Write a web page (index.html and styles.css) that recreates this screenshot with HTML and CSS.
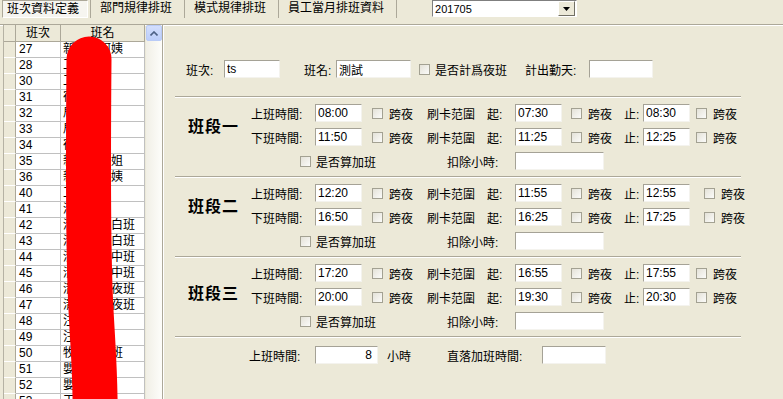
FILE: index.html
```html
<!DOCTYPE html>
<html lang="zh-Hant">

<head>
    <meta charset="UTF-8">
    <title>班次資料定義</title>
    <link rel="stylesheet" href="styles.css">
</head>

<body>
    <div class="topbar">
        <div class="tabs">
            <span class="tab active">班次資料定義</span>
            <span class="tab">部門規律排班</span>
            <span class="tab">模式規律排班</span>
            <span class="tab last">員工當月排班資料</span>
        </div>
        <div class="combo">
            <span class="combo-text">201705</span>
            <span class="combo-btn">
                <svg width="7" height="4" viewBox="0 0 7 4"><path d="M0 0h7L3.5 4z" fill="#000"/></svg>
            </span>
        </div>
    </div>

    <div class="main">
        <div class="grid-panel">
            <div class="grid">
                <div class="grid-cols">
                    <div class="g-head">
                        <div class="c-ind"></div>
                        <div class="c-no">班次</div>
                        <div class="c-name">班名</div>
                    </div>
                    <div class="g-row"><div class="c-ind"></div><div class="c-no">27</div><div class="c-name">新莊陳阿姨</div></div>
                    <div class="g-row"><div class="c-ind"></div><div class="c-no">28</div><div class="c-name">工讀生</div></div>
                    <div class="g-row"><div class="c-ind"></div><div class="c-no">30</div><div class="c-name">工讀晚班</div></div>
                    <div class="g-row"><div class="c-ind"></div><div class="c-no">31</div><div class="c-name">宿舍管理</div></div>
                    <div class="g-row"><div class="c-ind"></div><div class="c-no">32</div><div class="c-name">局部支援</div></div>
                    <div class="g-row"><div class="c-ind"></div><div class="c-no">33</div><div class="c-name">局部加班</div></div>
                    <div class="g-row"><div class="c-ind"></div><div class="c-no">34</div><div class="c-name">宿舍夜班</div></div>
                    <div class="g-row"><div class="c-ind"></div><div class="c-no">35</div><div class="c-name">新莊王小姐</div></div>
                    <div class="g-row"><div class="c-ind"></div><div class="c-no">36</div><div class="c-name">新莊林阿姨</div></div>
                    <div class="g-row"><div class="c-ind"></div><div class="c-no">40</div><div class="c-name">工讀生</div></div>
                    <div class="g-row"><div class="c-ind"></div><div class="c-no">41</div><div class="c-name">清潔人員</div></div>
                    <div class="g-row"><div class="c-ind"></div><div class="c-no">42</div><div class="c-name">清潔人員白班</div></div>
                    <div class="g-row"><div class="c-ind"></div><div class="c-no">43</div><div class="c-name">清潔助理白班</div></div>
                    <div class="g-row"><div class="c-ind"></div><div class="c-no">44</div><div class="c-name">清潔人員中班</div></div>
                    <div class="g-row"><div class="c-ind"></div><div class="c-no">45</div><div class="c-name">清潔助理中班</div></div>
                    <div class="g-row"><div class="c-ind"></div><div class="c-no">46</div><div class="c-name">清潔人員夜班</div></div>
                    <div class="g-row"><div class="c-ind"></div><div class="c-no">47</div><div class="c-name">清潔助理夜班</div></div>
                    <div class="g-row"><div class="c-ind"></div><div class="c-no">48</div><div class="c-name">注射室</div></div>
                    <div class="g-row"><div class="c-ind"></div><div class="c-no">49</div><div class="c-name">注射室二</div></div>
                    <div class="g-row"><div class="c-ind"></div><div class="c-no">50</div><div class="c-name">牧場人員班</div></div>
                    <div class="g-row"><div class="c-ind"></div><div class="c-no">51</div><div class="c-name">嬰兒室</div></div>
                    <div class="g-row"><div class="c-ind"></div><div class="c-no">52</div><div class="c-name">嬰兒室夜</div></div>
                    <div class="g-row"><div class="c-ind"></div><div class="c-no">53</div><div class="c-name">工讀生</div></div>
                </div>
                <div class="vscroll">
                    <div class="sb-up">
                        <svg width="8" height="5" viewBox="0 0 8 5"><path d="M0.5 4.5L4 1l3.5 3.5" fill="none" stroke="#4d6185" stroke-width="1.6"/></svg>
                    </div>
                </div>
            </div>
            <!-- red marker over the names -->
            <svg class="scribble" width="162" height="374" viewBox="0 0 162 374">
                <path d="M89 34C88 150 88 230 91 285S96 360 95 400" fill="none" stroke="#ff0000" stroke-width="45" stroke-linecap="round"/>
            </svg>
        </div>

        <div class="form">
            <div class="top-row">
                <span class="lbl w38">班次:</span>
                <input class="tb w56" type="text" value="ts">
                <span class="lbl w32 ml24">班名:</span>
                <input class="tb w75" type="text" value="測試">
                <label class="chk ml8"><input type="checkbox">是否計爲夜班</label>
                <span class="lbl w64 ml18">計出勤天:</span>
                <input class="tb w64" type="text">
            </div>

            <div class="sep"></div>

            <div class="sec">
                <div class="sec-title">班段一</div>
                <div class="rows">
                    <div class="row">
                        <span class="lbl w64">上班時間:</span>
                        <input class="tb w47" type="text" value="08:00">
                        <label class="chk cell-a"><input type="checkbox">跨夜</label>
                        <span class="lbl w60">刷卡范圍</span>
                        <span class="lbl w28">起:</span>
                        <input class="tb w47" type="text" value="07:30">
                        <label class="chk cell-b"><input type="checkbox">跨夜</label>
                        <span class="lbl w19">止:</span>
                        <input class="tb w47" type="text" value="08:30">
                        <label class="chk cell-c"><input type="checkbox">跨夜</label>
                    </div>
                    <div class="row">
                        <span class="lbl w64">下班時間:</span>
                        <input class="tb w47" type="text" value="11:50">
                        <label class="chk cell-a"><input type="checkbox">跨夜</label>
                        <span class="lbl w60">刷卡范圍</span>
                        <span class="lbl w28">起:</span>
                        <input class="tb w47" type="text" value="11:25">
                        <label class="chk cell-b"><input type="checkbox">跨夜</label>
                        <span class="lbl w19">止:</span>
                        <input class="tb w47" type="text" value="12:25">
                        <label class="chk cell-c"><input type="checkbox">跨夜</label>
                    </div>
                    <div class="row">
                        <label class="chk cell-ot"><input type="checkbox">是否算加班</label>
                        <span class="lbl w68">扣除小時:</span>
                        <input class="tb w89" type="text">
                    </div>
                </div>
            </div>

            <div class="sep"></div>

            <div class="sec">
                <div class="sec-title">班段二</div>
                <div class="rows">
                    <div class="row">
                        <span class="lbl w64">上班時間:</span>
                        <input class="tb w47" type="text" value="12:20">
                        <label class="chk cell-a"><input type="checkbox">跨夜</label>
                        <span class="lbl w60">刷卡范圍</span>
                        <span class="lbl w28">起:</span>
                        <input class="tb w47" type="text" value="11:55">
                        <label class="chk cell-b"><input type="checkbox">跨夜</label>
                        <span class="lbl w19">止:</span>
                        <input class="tb w47" type="text" value="12:55">
                        <label class="chk cell-c wide"><input type="checkbox">跨夜</label>
                    </div>
                    <div class="row">
                        <span class="lbl w64">下班時間:</span>
                        <input class="tb w47" type="text" value="16:50">
                        <label class="chk cell-a"><input type="checkbox">跨夜</label>
                        <span class="lbl w60">刷卡范圍</span>
                        <span class="lbl w28">起:</span>
                        <input class="tb w47" type="text" value="16:25">
                        <label class="chk cell-b"><input type="checkbox">跨夜</label>
                        <span class="lbl w19">止:</span>
                        <input class="tb w47" type="text" value="17:25">
                        <label class="chk cell-c wide"><input type="checkbox">跨夜</label>
                    </div>
                    <div class="row">
                        <label class="chk cell-ot"><input type="checkbox">是否算加班</label>
                        <span class="lbl w68">扣除小時:</span>
                        <input class="tb w89" type="text">
                    </div>
                </div>
            </div>

            <div class="sep"></div>

            <div class="sec">
                <div class="sec-title low">班段三</div>
                <div class="rows">
                    <div class="row">
                        <span class="lbl w64">上班時間:</span>
                        <input class="tb w47" type="text" value="17:20">
                        <label class="chk cell-a"><input type="checkbox">跨夜</label>
                        <span class="lbl w60">刷卡范圍</span>
                        <span class="lbl w28">起:</span>
                        <input class="tb w47" type="text" value="16:55">
                        <label class="chk cell-b"><input type="checkbox">跨夜</label>
                        <span class="lbl w19">止:</span>
                        <input class="tb w47" type="text" value="17:55">
                        <label class="chk cell-c"><input type="checkbox">跨夜</label>
                    </div>
                    <div class="row">
                        <span class="lbl w64">下班時間:</span>
                        <input class="tb w47" type="text" value="20:00">
                        <label class="chk cell-a"><input type="checkbox">跨夜</label>
                        <span class="lbl w60">刷卡范圍</span>
                        <span class="lbl w28">起:</span>
                        <input class="tb w47" type="text" value="19:30">
                        <label class="chk cell-b"><input type="checkbox">跨夜</label>
                        <span class="lbl w19">止:</span>
                        <input class="tb w47" type="text" value="20:30">
                        <label class="chk cell-c"><input type="checkbox">跨夜</label>
                    </div>
                    <div class="row">
                        <label class="chk cell-ot"><input type="checkbox">是否算加班</label>
                        <span class="lbl w68">扣除小時:</span>
                        <input class="tb w89" type="text">
                    </div>
                </div>
            </div>

            <div class="sep"></div>

            <div class="bottom-row">
                <span class="lbl w66">上班時間:</span>
                <input class="tb w63 num" type="text" value="8">
                <span class="lbl w60 ml9">小時</span>
                <span class="lbl w95">直落加班時間:</span>
                <input class="tb w64" type="text">
            </div>
        </div>
    </div>
</body>

</html>
```

FILE: styles.css
```css
* {
    box-sizing: border-box;
}

body {
    margin: 0;
    width: 783px;
    height: 399px;
    overflow: hidden;
    background: #ece9d8;
    color: #000;
    font-family: "Liberation Sans", "Noto Sans CJK TC", sans-serif;
    font-size: 12px;
}

/* top toolbar */

.topbar {
    display: flex;
    height: 25px;
    border-bottom: 1px solid #aca899;
    box-shadow: 0 1px #fff;
}

.tabs {
    display: flex;
    height: 18px;
    margin-left: 2px;
}

.tab {
    height: 18px;
    line-height: 17px;
    padding: 0 12px 0 9px;
    border-left: 1px solid #aca899;
    white-space: nowrap;
}

.tab.active {
    padding: 0 8px 0 4px;
    margin-right: 2px;
    border: 1px solid;
    border-color: #aca899 #fff #fff #aca899;
    background: #f6f5f0;
}

.tab.last {
    border-right: 1px solid #aca899;
}

.combo {
    display: flex;
    align-items: center;
    width: 145px;
    height: 17px;
    margin-left: 35px;
    background: #fff;
    border: 1px solid;
    border-color: #7f7f7f #fff #fff #7f7f7f;
}

.combo-text {
    flex: 1;
    padding-left: 2px;
    font-size: 11px;
}

.combo-btn {
    display: flex;
    align-items: center;
    justify-content: center;
    width: 17px;
    height: 15px;
    margin-right: 1px;
    background: #ece9d8;
    border: 1px solid;
    border-color: #fff #716f64 #716f64 #fff;
}

/* left grid */

.main {
    display: flex;
    height: 374px;
}

.grid-panel {
    position: relative;
    width: 163px;
    border-right: 1px solid #aca899;
    box-shadow: 1px 0 #fff;
    overflow: hidden;
}

.grid {
    display: flex;
    height: 374px;
    margin-left: 3px;
    border-left: 1px solid #b5b2a4;
}

.grid-cols {
    width: 141px;
}

.g-head,
.g-row {
    display: flex;
    height: 16px;
    line-height: 15px;
    border-bottom: 1px solid #c0c0c0;
}

.g-head {
    height: 17px;
    line-height: 16px;
    border-bottom-color: #aca899;
}

.c-ind {
    width: 12px;
    background: #ece9d8;
    border-right: 1px solid #aca899;
}

.g-row .c-ind {
    border-bottom: 1px solid #fff;
    margin-bottom: -1px;
}

.c-no {
    width: 45px;
    padding-left: 3px;
    background: #fff;
    border-right: 1px solid #c0c0c0;
}

.c-name {
    width: 84px;
    padding-left: 2px;
    background: #fff;
    border-right: 1px solid #c0c0c0;
    white-space: nowrap;
    overflow: hidden;
}

.g-head .c-no,
.g-head .c-name {
    padding: 0;
    text-align: center;
    background: #ece9d8;
    border-right-color: #aca899;
}

.vscroll {
    width: 16px;
    margin-left: 1px;
    background: linear-gradient(to right, #f1efe6, #fdfdfa);
}

.sb-up {
    display: flex;
    align-items: center;
    justify-content: center;
    height: 16px;
    border: 1px solid #b9cbf7;
    border-radius: 2px;
    background: linear-gradient(#d3defc, #bccefa);
}

.scribble {
    position: absolute;
    top: 0;
    left: 0;
}

/* right form */

.form {
    flex: 1;
    padding: 35px 0 0 12px;
}

.top-row {
    display: flex;
    align-items: center;
    height: 18px;
    padding-left: 11px;
}

.sep {
    width: 566px;
    height: 2px;
    border-top: 1px solid #aca899;
    border-bottom: 1px solid #fff;
}

.top-row + .sep {
    margin-top: 18px;
}

.sec {
    display: flex;
    padding: 6px 0;
}

.sec-title {
    width: 76px;
    padding-left: 13px;
    margin-top: 13px;
    font-family: "Noto Sans CJK TC", sans-serif;
    font-weight: bold;
    font-size: 16px;
    line-height: 16px;
    letter-spacing: 1px;
    height: 16px;
}

.sec-title.low {
    margin-top: 20px;
}

.rows {
    display: flex;
    flex-direction: column;
    gap: 6px;
}

.row {
    display: flex;
    align-items: center;
    height: 18px;
}

.bottom-row {
    display: flex;
    align-items: center;
    height: 18px;
    margin-top: 8px;
    padding-left: 74px;
}

.lbl {
    flex: none;
    white-space: nowrap;
}

.tb {
    flex: none;
    height: 18px;
    margin: 0;
    padding: 0 2px;
    border: 1px solid;
    border-color: #a5a296 #f4f3ee #f4f3ee #a5a296;
    background: #fff;
    color: #000;
    font-family: "Liberation Sans", "Noto Sans CJK TC", sans-serif;
    font-size: 12px;
    outline: none;
}

.tb.num {
    text-align: right;
    padding-right: 5px;
}

.chk {
    flex: none;
    display: flex;
    align-items: center;
    white-space: nowrap;
}

.chk input {
    appearance: none;
    width: 11px;
    height: 11px;
    margin: 0 5px 0 0;
    border: 1px solid #a3a192;
    background: linear-gradient(135deg, #e4e2d8, #fbfbf9);
}

.cell-a {
    width: 65px;
    padding-left: 10px;
}

.cell-a input,
.cell-b input,
.cell-c input {
    margin-right: 6px;
}

.cell-b {
    width: 62px;
    padding-left: 9px;
}

.cell-c {
    padding-left: 6px;
}

.cell-c.wide {
    padding-left: 14px;
}

.cell-ot {
    width: 196px;
    padding-left: 49px;
}

.w19 { width: 19px; }
.w28 { width: 28px; }
.w32 { width: 32px; }
.w38 { width: 38px; }
.w47 { width: 47px; }
.w56 { width: 56px; }
.w60 { width: 60px; }
.w63 { width: 63px; }
.w64 { width: 64px; }
.w66 { width: 66px; }
.w68 { width: 68px; }
.w75 { width: 75px; }
.w89 { width: 89px; }
.w95 { width: 95px; }

.ml8 { margin-left: 8px; }
.ml9 { margin-left: 9px; }
.ml18 { margin-left: 18px; }
.ml24 { margin-left: 24px; }
```
